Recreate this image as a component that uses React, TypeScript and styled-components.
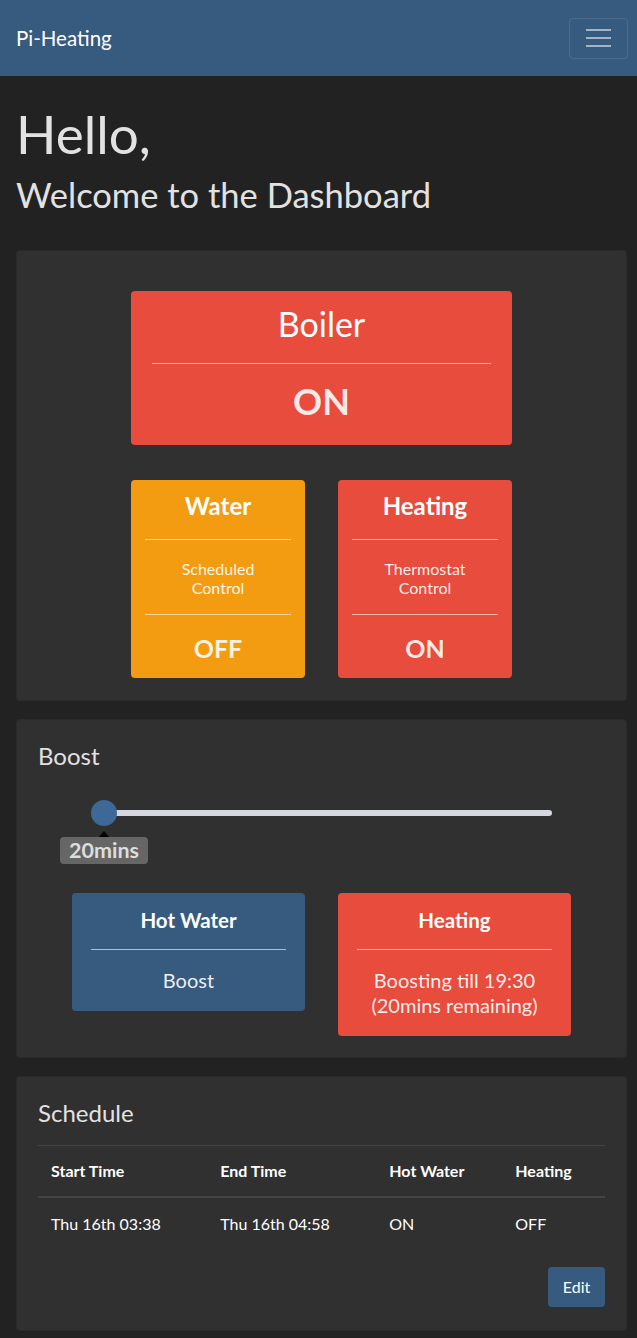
import styled, { createGlobalStyle } from "styled-components";

const GlobalStyle = createGlobalStyle`
  html, body {
    margin: 0;
    padding: 0;
    background: #222222;
  }
  body {
    font-family: Lato, "Noto Sans", "Liberation Sans", sans-serif;
    font-size: 16px;
    color: #ffffff;
  }
  * {
    box-sizing: border-box;
  }
`;

const Navbar = styled.nav`
  height: 76px;
  background: #375a7f;
  display: flex;
  align-items: center;
  justify-content: space-between;
  padding: 0 9px 0 16px;
`;

const Brand = styled.span`
  font-size: 20.5px;
  color: #ffffff;
`;

const Toggler = styled.button`
  width: 59px;
  height: 41px;
  border: 1px solid rgba(255, 255, 255, 0.1);
  border-radius: 4px;
  background: transparent;
  display: flex;
  flex-direction: column;
  align-items: center;
  justify-content: center;
  gap: 6px;
  padding: 0;

  & > span {
    display: block;
    width: 25px;
    height: 2px;
    background: rgba(255, 255, 255, 0.55);
  }
`;

const Main = styled.main`
  padding: 26px 10px 8px 16px;
  display: flex;
  flex-direction: column;
`;

const Hello = styled.h1`
  margin: 0;
  font-size: 53px;
  font-weight: 400;
  line-height: 1.2;
  color: #e2e2e2;
`;

const Welcome = styled.h2`
  margin: 8px 0 35px;
  font-size: 34.5px;
  font-weight: 400;
  line-height: 1.2;
  color: #e2e2e2;
`;

const Card = styled.section`
  background: #303030;
  border: 1px solid rgba(0, 0, 0, 0.125);
  border-radius: 4px;
  padding: 21px;
  & + & {
    margin-top: 18px;
  }
`;

const StatusCard = styled(Card)`
  padding: 40px 21px 22px;
  display: flex;
  flex-direction: column;
  align-items: center;
`;

const ScheduleCard = styled(Card)`
  padding-bottom: 23px;
`;

const CardTitle = styled.h4`
  margin: 0;
  font-size: 24px;
  font-weight: 400;
  line-height: 1.25;
  color: #e2e2e2;
`;

const Tile = styled.div<{ $tone: "red" | "orange" | "blue" }>`
  background: ${(p) =>
    p.$tone === "red" ? "#e74c3c" : p.$tone === "orange" ? "#f39c12" : "#375a7f"};
  border-radius: 4px;
  color: #ffffff;
  text-align: center;
  display: flex;
  flex-direction: column;
`;

const Rule = styled.hr`
  width: 100%;
  margin: 0;
  border: 0;
  border-top: 1px solid rgba(255, 255, 255, 0.6);
`;

const BoilerTile = styled(Tile)`
  width: 381px;
  padding: 13px 21px 22px;
`;

const BoilerName = styled.div`
  font-size: 34px;
  line-height: 1.2;
  margin-bottom: 18px;
`;

const BigState = styled.div`
  font-size: 36px;
  font-weight: 700;
  line-height: 1.2;
  margin-top: 16px;
  color: rgba(255, 255, 255, 0.88);
`;

const TileRow = styled.div<{ $mt: number }>`
  display: flex;
  gap: 33px;
  margin-top: ${(p) => p.$mt}px;
  align-items: flex-start;
`;

const SmallTile = styled(Tile)`
  width: 174px;
  padding: 12px 14px 15px;
`;

const TileHead = styled.div<{ $size: number; $gap: number }>`
  font-size: ${(p) => p.$size}px;
  font-weight: 700;
  line-height: 1.2;
  margin-bottom: ${(p) => p.$gap}px;
`;

const TileNote = styled.div`
  font-size: 16px;
  line-height: 1.2;
  margin: 19px 0 17px;
  color: rgba(255, 255, 255, 0.92);
`;

const TileState = styled.div`
  font-size: 25px;
  font-weight: 700;
  line-height: 1.2;
  margin-top: 18px;
  color: rgba(255, 255, 255, 0.88);
`;

const SliderWrap = styled.div`
  margin: 30px 0 0 53px;
  width: 461px;
  position: relative;
  height: 92px;
`;

const Track = styled.div`
  position: absolute;
  left: 13px;
  right: 0;
  top: 9px;
  height: 6px;
  border-radius: 3px;
  background: #d5d9df;
`;

const Handle = styled.div`
  position: absolute;
  left: 0;
  top: -1px;
  width: 26px;
  height: 26px;
  border-radius: 50%;
  background: #3e6896;
`;

const Tip = styled.div`
  position: absolute;
  left: -31px;
  top: 36px;
  width: 88px;
  height: 27px;
  border-radius: 4px;
  background: #666666;
  color: #dddddd;
  font-weight: 700;
  font-size: 21.5px;
  line-height: 27px;
  text-align: center;

  &::before {
    content: "";
    position: absolute;
    left: 39px;
    top: -6px;
    border-left: 5px solid transparent;
    border-right: 5px solid transparent;
    border-bottom: 6px solid #000000;
  }
`;

const BoostRow = styled.div`
  display: flex;
  justify-content: center;
  gap: 33px;
  align-items: flex-start;
`;

const BoostTile = styled(Tile)`
  width: 233px;
  padding: 15px 19px 18px;
`;

const BoostText = styled.div`
  font-size: 20px;
  line-height: 1.25;
  margin-top: 18px;
  color: rgba(255, 255, 255, 0.92);
`;

const Table = styled.table`
  width: 100%;
  margin-top: 17px;
  border-collapse: collapse;
  font-size: 16px;
  color: #ffffff;

  th,
  td {
    text-align: left;
    padding: 13px 13px;
    line-height: 1.5;
  }
  th {
    font-weight: 700;
    border-top: 1px solid #444444;
    border-bottom: 2px solid #444444;
  }
  td {
    padding-top: 14px;
    padding-bottom: 14px;
  }
`;

const Actions = styled.div`
  display: flex;
  justify-content: flex-end;
  margin-top: 17px;
`;

const EditButton = styled.button`
  background: #375a7f;
  color: #ffffff;
  border: 0;
  border-radius: 4px;
  width: 57px;
  height: 40px;
  font-family: inherit;
  font-size: 16px;
`;

export default function App() {
  return (
    <>
      <GlobalStyle />
      <Navbar>
        <Brand>Pi-Heating</Brand>
        <Toggler aria-label="menu">
          <span />
          <span />
          <span />
        </Toggler>
      </Navbar>
      <Main>
        <Hello>Hello,</Hello>
        <Welcome>Welcome to the Dashboard</Welcome>

        <StatusCard>
          <BoilerTile $tone="red">
            <BoilerName>Boiler</BoilerName>
            <Rule />
            <BigState>ON</BigState>
          </BoilerTile>
          <TileRow $mt={35}>
            <SmallTile $tone="orange">
              <TileHead $size={24} $gap={18}>Water</TileHead>
              <Rule />
              <TileNote>
                Scheduled
                <br />
                Control
              </TileNote>
              <Rule />
              <TileState>OFF</TileState>
            </SmallTile>
            <SmallTile $tone="red">
              <TileHead $size={24} $gap={18}>Heating</TileHead>
              <Rule />
              <TileNote>
                Thermostat
                <br />
                Control
              </TileNote>
              <Rule />
              <TileState>ON</TileState>
            </SmallTile>
          </TileRow>
        </StatusCard>

        <Card>
          <CardTitle>Boost</CardTitle>
          <SliderWrap>
            <Track />
            <Handle />
            <Tip>20mins</Tip>
          </SliderWrap>
          <BoostRow>
            <BoostTile $tone="blue">
              <TileHead $size={20.5} $gap={16}>Hot Water</TileHead>
              <Rule />
              <BoostText>Boost</BoostText>
            </BoostTile>
            <BoostTile $tone="red">
              <TileHead $size={20.5} $gap={16}>Heating</TileHead>
              <Rule />
              <BoostText>
                Boosting till 19:30
                <br />
                (20mins remaining)
              </BoostText>
            </BoostTile>
          </BoostRow>
        </Card>

        <ScheduleCard>
          <CardTitle>Schedule</CardTitle>
          <Table>
            <thead>
              <tr>
                <th>Start Time</th>
                <th>End Time</th>
                <th>Hot Water</th>
                <th>Heating</th>
              </tr>
            </thead>
            <tbody>
              <tr>
                <td>Thu 16th 03:38</td>
                <td>Thu 16th 04:58</td>
                <td>ON</td>
                <td>OFF</td>
              </tr>
            </tbody>
          </Table>
          <Actions>
            <EditButton>Edit</EditButton>
          </Actions>
        </ScheduleCard>
      </Main>
    </>
  );
}
